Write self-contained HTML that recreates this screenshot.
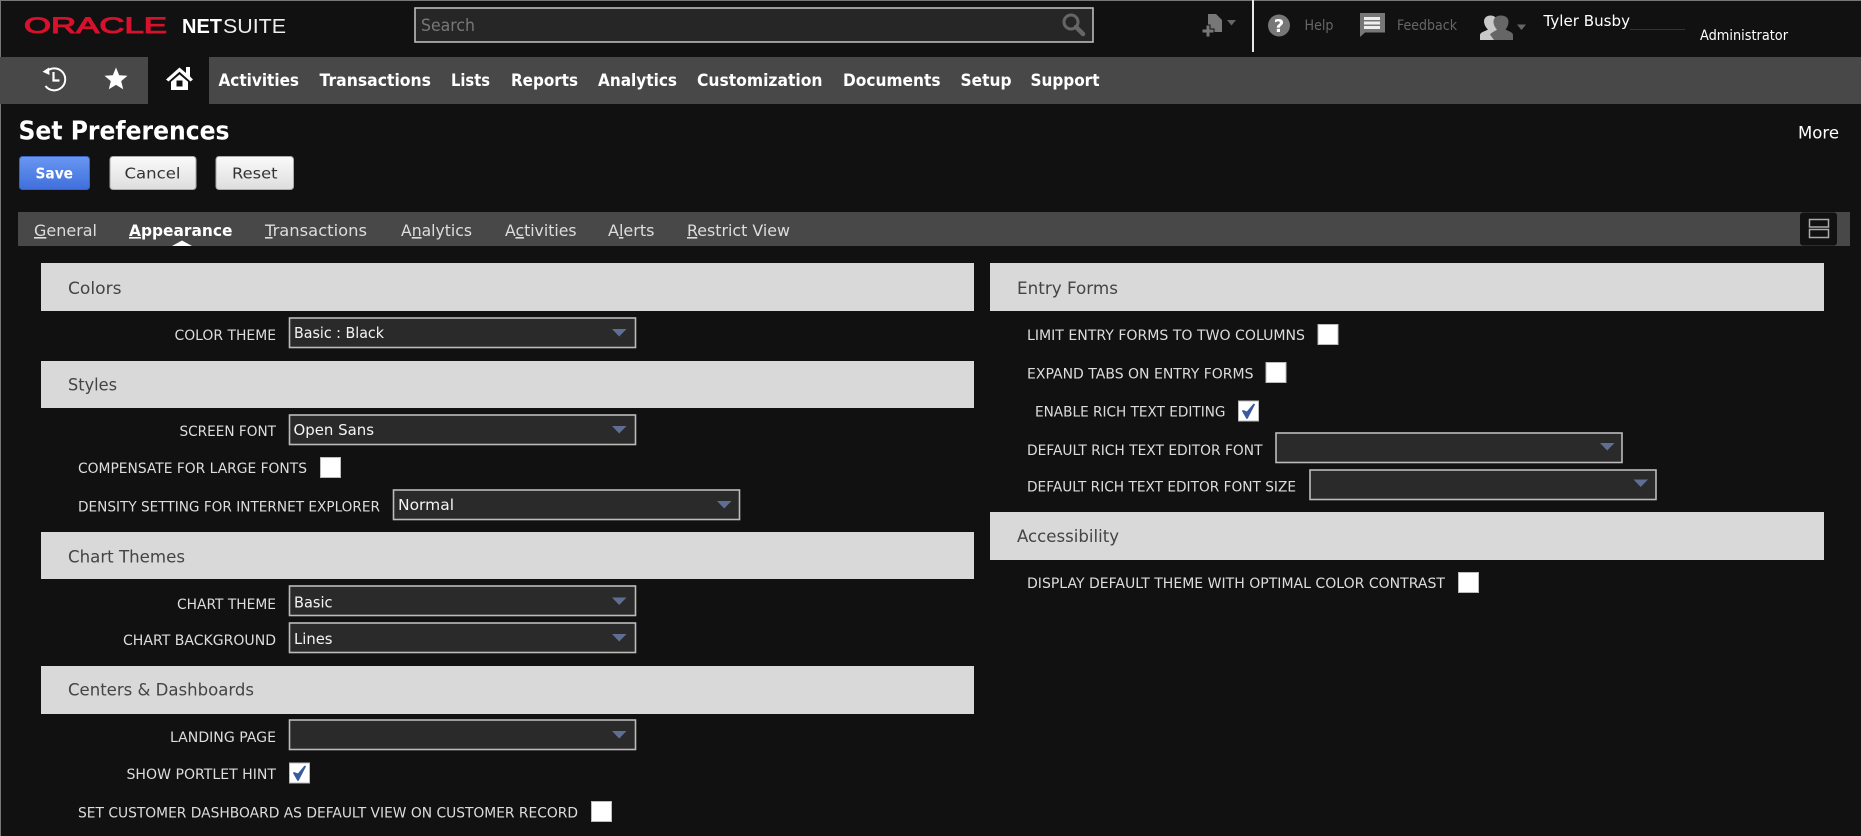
<!DOCTYPE html>
<html lang="en"><head><meta charset="utf-8"><title>Set Preferences</title>
<style>
html,body{margin:0;padding:0;background:#111;width:1861px;height:836px;overflow:hidden}
svg{display:block}
text{font-family:"DejaVu Sans","Liberation Sans",sans-serif;white-space:pre}
.l{font-size:14px;fill:#ddd}
.v{font-size:15.5px;fill:#f4f4f4}
.s{font-size:16.5px;fill:#444}
.n{font-size:16.5px;font-weight:700;fill:#fff}
.t{font-size:16px;fill:#ddd}
.sel{fill:#2a2a2a;stroke:#bbb;stroke-width:1.6}
.tri{fill:#5f6f93}
.cb{fill:#fff;stroke:#bbb;stroke-width:1}
.u{text-decoration:underline}
</style></head>
<body>
<svg width="1861" height="836" viewBox="0 0 1861 836" xmlns="http://www.w3.org/2000/svg">
<defs>
<linearGradient id="blue" x1="0" y1="0" x2="0" y2="1"><stop offset="0" stop-color="#6a97f2"/><stop offset="1" stop-color="#3f6fdc"/></linearGradient>
<linearGradient id="gray" x1="0" y1="0" x2="0" y2="1"><stop offset="0" stop-color="#fafafa"/><stop offset="1" stop-color="#dedede"/></linearGradient>
<path id="tr" d="M0 0H14.5L7.2 7.5Z"/>
<g id="chk"><path d="M4.500 10L8.500 17L15.500 3.500L8.700 11.500Z" fill="#3a5a9e" stroke="#3a5a9e" stroke-width="1.800" stroke-linejoin="round"/></g>
</defs>
<rect width="1861" height="836" fill="#111"/>
<rect x="0" y="0" width="1861" height="1" fill="#777"/>
<rect x="0" y="0" width="1" height="836" fill="#777"/>

<!-- logo -->
<text x="24" y="33" font-size="22" fill="#d8112c" stroke="#d8112c" stroke-width="1" textLength="143" lengthAdjust="spacingAndGlyphs" style="font-family:'Liberation Sans',sans-serif">ORACLE</text>
<text x="182" y="33" font-size="20" font-weight="700" fill="#fff" textLength="40" lengthAdjust="spacingAndGlyphs" style="font-family:'Liberation Sans',sans-serif">NET</text>
<text x="223" y="33" font-size="20" fill="#eee" textLength="63" lengthAdjust="spacingAndGlyphs" style="font-family:'Liberation Sans',sans-serif">SUITE</text>

<!-- search -->
<rect x="415" y="8" width="678" height="34" fill="#262626" stroke="#bbb" stroke-width="1.600"/>
<text x="421" y="31" font-size="17" fill="#777" textLength="54" lengthAdjust="spacingAndGlyphs">Search</text>
<circle cx="1071" cy="22" r="7" fill="none" stroke="#666" stroke-width="3"/>
<path d="M1076 27L1083 34" stroke="#666" stroke-width="4.500" stroke-linecap="round"/>

<!-- header right -->
<path d="M1208 14H1216L1222 20V32H1208Z" fill="#777"/>
<path d="M1202 29H1206V25H1210V29H1214V33H1210V37H1206V33H1202Z" fill="#777" stroke="#111" stroke-width="1"/>
<path d="M1227 20H1236L1231.500 25.500Z" fill="#666"/>
<rect x="1252" y="0" width="2" height="52" fill="#e8e8e8"/>
<circle cx="1279" cy="25.500" r="11" fill="#777"/>
<text x="1279" y="32" font-size="18" font-weight="700" fill="#fff" text-anchor="middle">?</text>
<text x="1304.500" y="30" font-size="14" fill="#666" textLength="29" lengthAdjust="spacingAndGlyphs">Help</text>
<path d="M1360 13H1385V32.500H1365L1360 37Z" fill="#777"/>
<rect x="1364" y="17" width="16" height="3" fill="#eee"/><rect x="1364" y="21.500" width="16" height="3" fill="#eee"/><rect x="1364" y="26" width="16" height="3" fill="#eee"/>
<text x="1397" y="30" font-size="14" fill="#666" textLength="60" lengthAdjust="spacingAndGlyphs">Feedback</text>
<path d="M1480 40V35C1480 32 1486 31 1488 29.500C1485 27 1484 23 1484 21.500C1484 17.500 1487 15.500 1490.500 15.500C1494 15.500 1497 17.500 1497 21.500V40Z" fill="#c8c8c8"/>
<path d="M1494 40H1513V35C1513 32 1508 31 1505.500 29.500C1508 27 1508.500 23 1508.500 21.500C1508.500 17.500 1505 15.500 1501 15.500C1497 15.500 1493.500 17.500 1493.500 21.500C1493.500 25 1495 27.500 1497 29.500C1495 31 1491 33 1490 34.500Z" fill="#666"/>
<path d="M1517 24.500H1526L1521.500 30Z" fill="#666"/>
<text x="1543.500" y="26" font-size="15.500" fill="#fff" textLength="86.500" lengthAdjust="spacingAndGlyphs">Tyler Busby</text>
<rect x="1630" y="29" width="55" height="1" fill="#333"/>
<text x="1700" y="40" font-size="14" fill="#fff" textLength="88" lengthAdjust="spacingAndGlyphs">Administrator</text>

<!-- nav -->
<rect x="0" y="57" width="148" height="47" fill="#484848"/>
<rect x="209" y="57" width="1652" height="47" fill="#484848"/>
<g transform="translate(-1.500 0)">
<path d="M48 71.500A11 11 0 1 1 47 86" fill="none" stroke="#fff" stroke-width="2"/>
<path d="M44 71.800L50.500 67.500L51 75Z" fill="#fff"/>
<path d="M55 72V80.500H61" fill="none" stroke="#fff" stroke-width="2.200"/>
</g>
<path d="M116 67.500L119.200 75.200L127.500 75.800L121.200 81.100L123.200 89.300L116 84.900L108.800 89.300L110.800 81.100L104.500 75.800L112.800 75.200Z" fill="#fff"/>
<path d="M166 79.500L179.500 67.500L186 73V67H190V76.500L193 79.500L190.500 81.500L179.500 71.800L168.500 81.500Z" fill="#fff"/>
<path d="M171 81.800L179.500 74.500L188 81.800V90H171ZM176.500 80.500V86.500H182.500V80.500Z" fill="#fff" fill-rule="evenodd"/>

<text class="n" x="218.500" y="86" textLength="80.500" lengthAdjust="spacingAndGlyphs">Activities</text>
<text class="n" x="319.500" y="86" textLength="111.500" lengthAdjust="spacingAndGlyphs">Transactions</text>
<text class="n" x="451" y="86" textLength="39" lengthAdjust="spacingAndGlyphs">Lists</text>
<text class="n" x="511" y="86" textLength="67" lengthAdjust="spacingAndGlyphs">Reports</text>
<text class="n" x="598" y="86" textLength="79" lengthAdjust="spacingAndGlyphs">Analytics</text>
<text class="n" x="697" y="86" textLength="125.500" lengthAdjust="spacingAndGlyphs">Customization</text>
<text class="n" x="843" y="86" textLength="97.500" lengthAdjust="spacingAndGlyphs">Documents</text>
<text class="n" x="960.500" y="86" textLength="51" lengthAdjust="spacingAndGlyphs">Setup</text>
<text class="n" x="1030.500" y="86" textLength="69" lengthAdjust="spacingAndGlyphs">Support</text>

<!-- title -->
<text x="18.500" y="139.500" font-size="25.500" font-weight="700" fill="#fff" textLength="211" lengthAdjust="spacingAndGlyphs">Set Preferences</text>
<text x="1798" y="138.500" font-size="16.500" fill="#fff" textLength="41" lengthAdjust="spacingAndGlyphs">More</text>

<!-- buttons -->
<rect x="19.500" y="156.500" width="70" height="33" rx="3" fill="url(#blue)" stroke="#3a63c0"/>
<text x="35.500" y="178.500" font-size="15.500" font-weight="700" fill="#fff" textLength="37.500" lengthAdjust="spacingAndGlyphs">Save</text>
<rect x="110" y="156.500" width="86" height="33" rx="3" fill="url(#gray)" stroke="#aaa"/>
<text x="124.500" y="178.500" font-size="15.500" fill="#333" textLength="56" lengthAdjust="spacingAndGlyphs">Cancel</text>
<rect x="216" y="156.500" width="77.500" height="33" rx="3" fill="url(#gray)" stroke="#aaa"/>
<text x="232" y="178.500" font-size="15.500" fill="#333" textLength="45.500" lengthAdjust="spacingAndGlyphs">Reset</text>

<!-- tabs -->
<rect x="18" y="212" width="1832" height="34" fill="#484848"/>
<text class="t" x="34" y="236" textLength="63" lengthAdjust="spacingAndGlyphs"><tspan class="u">G</tspan>eneral</text>
<text class="t" x="129" y="236" font-weight="700" style="fill:#fff" textLength="103.500" lengthAdjust="spacingAndGlyphs"><tspan class="u">A</tspan>ppearance</text>
<text class="t" x="265" y="236" textLength="102" lengthAdjust="spacingAndGlyphs"><tspan class="u">T</tspan>ransactions</text>
<text class="t" x="401" y="236" textLength="71" lengthAdjust="spacingAndGlyphs">A<tspan class="u">n</tspan>alytics</text>
<text class="t" x="505" y="236" textLength="71.500" lengthAdjust="spacingAndGlyphs">A<tspan class="u">c</tspan>tivities</text>
<text class="t" x="608" y="236" textLength="46.500" lengthAdjust="spacingAndGlyphs">A<tspan class="u">l</tspan>erts</text>
<text class="t" x="687" y="236" textLength="103" lengthAdjust="spacingAndGlyphs"><tspan class="u">R</tspan>estrict View</text>
<path d="M172 246L182 240.500L192 246Z" fill="#fff"/>
<rect x="1800" y="212.500" width="37" height="33" rx="3" fill="#111"/>
<rect x="1809.500" y="219.500" width="19" height="7.500" fill="none" stroke="#aaa" stroke-width="1.500"/>
<rect x="1809.500" y="229.500" width="19" height="8" fill="none" stroke="#aaa" stroke-width="1.500"/>

<!-- section bars left -->
<rect x="41" y="263" width="933" height="48" fill="#d9d9d9"/>
<rect x="41" y="361" width="933" height="47" fill="#d9d9d9"/>
<rect x="41" y="532" width="933" height="47" fill="#d9d9d9"/>
<rect x="41" y="666" width="933" height="48" fill="#d9d9d9"/>
<text class="s" x="68" y="294" textLength="53.500" lengthAdjust="spacingAndGlyphs">Colors</text>
<text class="s" x="68" y="390.500" textLength="49" lengthAdjust="spacingAndGlyphs">Styles</text>
<text class="s" x="68" y="562.500" textLength="117" lengthAdjust="spacingAndGlyphs">Chart Themes</text>
<text class="s" x="68" y="695.500" textLength="186" lengthAdjust="spacingAndGlyphs">Centers &amp; Dashboards</text>

<!-- section bars right -->
<rect x="990" y="263" width="834" height="48" fill="#d9d9d9"/>
<rect x="990" y="512" width="834" height="48" fill="#d9d9d9"/>
<text class="s" x="1017" y="294" textLength="101" lengthAdjust="spacingAndGlyphs">Entry Forms</text>
<text class="s" x="1017" y="542" textLength="102" lengthAdjust="spacingAndGlyphs">Accessibility</text>

<!-- left fields -->
<text class="l" x="174.500" y="340" textLength="101.500" lengthAdjust="spacingAndGlyphs">COLOR THEME</text>
<rect class="sel" x="289.500" y="318" width="346" height="29.500"/>
<text class="v" x="294" y="338" textLength="90" lengthAdjust="spacingAndGlyphs">Basic : Black</text>
<use href="#tr" class="tri" x="612" y="329"/>

<text class="l" x="179.500" y="436" textLength="96.500" lengthAdjust="spacingAndGlyphs">SCREEN FONT</text>
<rect class="sel" x="289.500" y="415" width="346" height="29.500"/>
<text class="v" x="293.500" y="435" textLength="80.500" lengthAdjust="spacingAndGlyphs">Open Sans</text>
<use href="#tr" class="tri" x="612" y="426"/>

<text class="l" x="78" y="473" textLength="229" lengthAdjust="spacingAndGlyphs">COMPENSATE FOR LARGE FONTS</text>
<rect class="cb" x="320.500" y="457.500" width="20" height="20"/>

<text class="l" x="78" y="511.500" textLength="302" lengthAdjust="spacingAndGlyphs">DENSITY SETTING FOR INTERNET EXPLORER</text>
<rect class="sel" x="393.500" y="490" width="346" height="29.500"/>
<text class="v" x="398" y="510" textLength="56" lengthAdjust="spacingAndGlyphs">Normal</text>
<use href="#tr" class="tri" x="717" y="501"/>

<text class="l" x="177" y="609" textLength="99" lengthAdjust="spacingAndGlyphs">CHART THEME</text>
<rect class="sel" x="289.500" y="586" width="346" height="29.500"/>
<text class="v" x="294" y="607.500" textLength="38.500" lengthAdjust="spacingAndGlyphs">Basic</text>
<use href="#tr" class="tri" x="612" y="597.500"/>

<text class="l" x="123" y="645" textLength="153" lengthAdjust="spacingAndGlyphs">CHART BACKGROUND</text>
<rect class="sel" x="289.500" y="623" width="346" height="29.500"/>
<text class="v" x="294" y="644" textLength="38.500" lengthAdjust="spacingAndGlyphs">Lines</text>
<use href="#tr" class="tri" x="612" y="634"/>

<text class="l" x="170" y="742" textLength="106" lengthAdjust="spacingAndGlyphs">LANDING PAGE</text>
<rect class="sel" x="289.500" y="720" width="346" height="29.500"/>
<use href="#tr" class="tri" x="612" y="731"/>

<text class="l" x="126.500" y="779" textLength="149.500" lengthAdjust="spacingAndGlyphs">SHOW PORTLET HINT</text>
<rect class="cb" x="289.500" y="763" width="20" height="20"/>
<use href="#chk" x="289.500" y="763"/>

<text class="l" x="78" y="817.500" textLength="500" lengthAdjust="spacingAndGlyphs">SET CUSTOMER DASHBOARD AS DEFAULT VIEW ON CUSTOMER RECORD</text>
<rect class="cb" x="591.500" y="801.500" width="20" height="20"/>

<!-- right fields -->
<text class="l" x="1027" y="340" textLength="278" lengthAdjust="spacingAndGlyphs">LIMIT ENTRY FORMS TO TWO COLUMNS</text>
<rect class="cb" x="1318" y="324.500" width="20" height="20"/>
<text class="l" x="1027" y="378.500" textLength="226.500" lengthAdjust="spacingAndGlyphs">EXPAND TABS ON ENTRY FORMS</text>
<rect class="cb" x="1266" y="362.500" width="20" height="20"/>
<text class="l" x="1035" y="416.500" textLength="190.500" lengthAdjust="spacingAndGlyphs">ENABLE RICH TEXT EDITING</text>
<rect class="cb" x="1238.500" y="401" width="20" height="20"/>
<use href="#chk" x="1238.500" y="401"/>
<text class="l" x="1027" y="455" textLength="235.500" lengthAdjust="spacingAndGlyphs">DEFAULT RICH TEXT EDITOR FONT</text>
<rect class="sel" x="1276" y="433" width="346" height="29.500"/>
<use href="#tr" class="tri" x="1600" y="443"/>
<text class="l" x="1027" y="491.500" textLength="269" lengthAdjust="spacingAndGlyphs">DEFAULT RICH TEXT EDITOR FONT SIZE</text>
<rect class="sel" x="1310" y="470" width="346" height="29.500"/>
<use href="#tr" class="tri" x="1633.500" y="479.500"/>
<text class="l" x="1027" y="588" textLength="418" lengthAdjust="spacingAndGlyphs">DISPLAY DEFAULT THEME WITH OPTIMAL COLOR CONTRAST</text>
<rect class="cb" x="1458.500" y="572.500" width="20" height="20"/>
</svg>
</body></html>
